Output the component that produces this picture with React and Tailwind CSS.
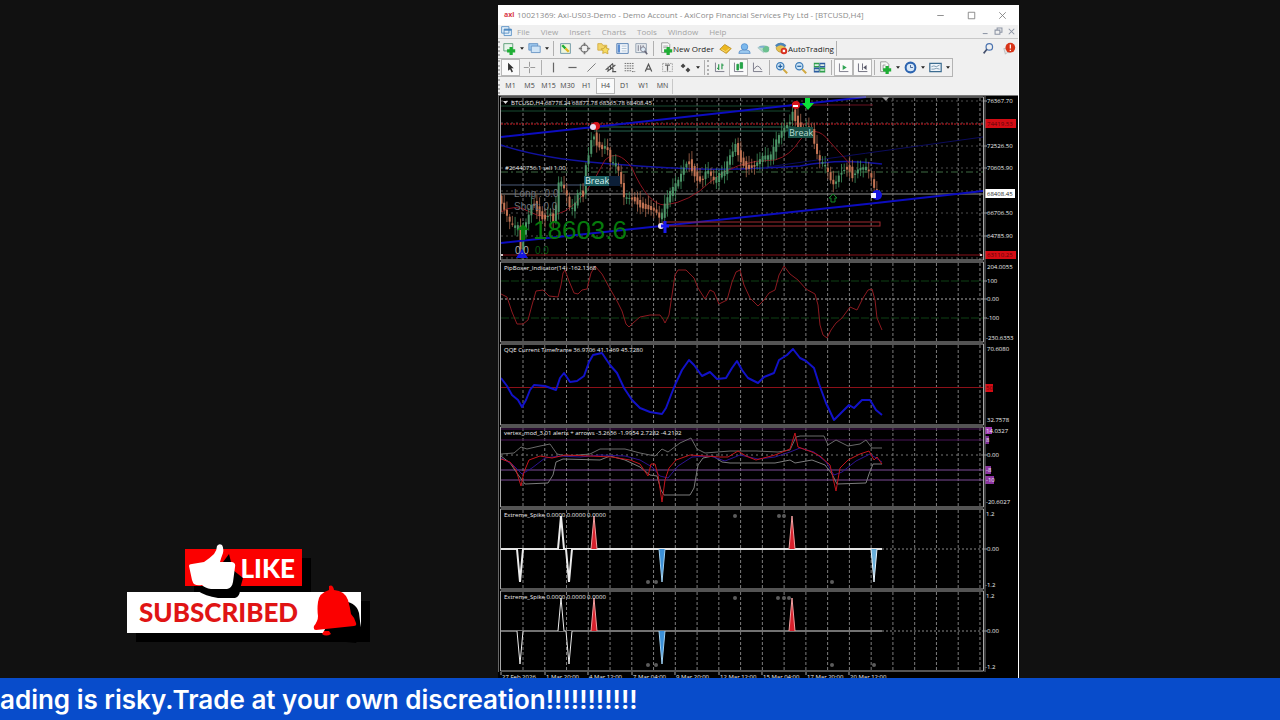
import React from 'react';

const GRID_X = Array.from({ length: 22 }, (_, i) => 523 + i * 21.76);
const GRID_Y = [101, 123, 146, 168, 191, 213, 236, 258];

const PRICE =
  '501,198 506,210 511,222 516,228 519,224 522,250 525,230 530,215 534,200 540,212 545,218 552,213 556,225 559,184 563,183 568,195 572,212 576,205 580,190 585,195 587,165 591,150 594,130 598,143 604,148 608,145 612,163 618,165 622,178 624,197 628,198 635,198 642,205 650,207 657,210 662,220 665,208 672,192 680,180 686,165 690,160 694,170 700,180 705,178 708,168 712,175 716,182 720,175 726,172 730,158 735,150 737,143 741,158 748,167 756,165 764,157 772,157 778,140 784,130 792,120 794,110 798,122 803,130 806,126 813,128 816,145 820,160 828,168 832,180 836,185 840,175 846,168 850,166 854,176 860,168 868,168 872,175 876,190 882,194';

const PIP =
  '501,294 507,297 512,312 517,324 523,324 528,320 532,305 536,291 543,290 549,296 558,297 561,285 563,273 565,270 569,281 574,293 578,294 582,290 587,289 591,273 595,266 602,274 609,287 617,301 622,311 626,324 629,327 633,323 640,317 650,315 660,315 663,319 665,323 669,315 672,295 675,275 678,270 686,270 694,278 698,288 705,299 710,290 714,292 719,304 727,300 732,282 736,272 740,270 744,285 750,298 758,306 764,300 769,293 775,290 779,275 784,266 790,274 798,280 806,289 815,294 818,305 820,325 823,335 827,338 831,330 836,323 842,318 850,307 857,310 863,298 868,290 872,289 875,300 877,318 882,330';

const QQE =
  '501,378 507,386 512,395 518,400 522,407 526,400 530,390 534,385 545,386 556,390 560,378 564,373 570,382 577,381 584,376 589,362 593,355 602,353 610,365 617,373 624,388 632,400 640,408 650,412 662,414 666,408 671,395 675,385 682,370 689,360 694,365 702,376 710,372 717,379 726,378 732,368 737,361 742,370 748,378 758,383 764,377 774,373 779,360 787,355 793,349 800,358 806,361 814,368 819,384 826,403 834,420 842,412 849,405 854,408 862,400 870,400 876,410 882,415';

const BAND_TOP =
  '501,454 514,453 521,447 527,449 540,446 550,444 557,454 566,456 590,454 600,449 625,449 640,453 655,456 662,449 668,452 680,443 691,438 697,449 705,453 730,451 756,451 778,452 790,450 796,437 800,436 824,436 828,445 836,440 848,446 860,444 866,440 872,448 882,448';
const BAND_LOW =
  '501,456 510,463 519,476 525,484 548,483 553,475 556,462 563,459 600,460 610,456 625,460 640,467 650,475 657,476 661,490 664,495 690,495 694,488 698,465 703,458 713,456 722,462 730,463 756,463 775,463 790,460 795,463 812,460 825,465 832,474 837,484 866,483 869,474 873,464 882,464';
const VERTEX =
  '501,459 510,462 516,470 521,486 524,472 529,460 540,456 552,458 565,455 590,456 612,457 630,460 640,464 648,476 651,464 655,464 658,475 662,502 665,480 669,468 676,460 690,455 705,456 720,457 728,457 738,451 746,456 756,460 775,455 790,449 795,433 798,447 812,452 820,456 830,465 836,491 840,468 848,460 860,454 869,451 874,460 877,457 882,464';
const VERTEX_SLOW =
  '501,458 512,464 522,474 532,468 545,458 560,456 580,457 600,455 625,456 640,460 652,467 660,476 668,478 678,466 692,457 710,456 725,461 740,455 758,459 775,457 790,452 800,448 814,452 826,462 834,475 842,472 856,461 870,454 882,462';

function toPoints(str) {
  return str.split(' ').map((p) => p.split(',').map(Number));
}

function priceAt(points, x) {
  for (let i = 1; i < points.length; i++) {
    const [x0, y0] = points[i - 1];
    const [x1, y1] = points[i];
    if (x <= x1) return y0 + ((y1 - y0) * (x - x0)) / (x1 - x0);
  }
  return points[points.length - 1][1];
}

function buildCandles() {
  const points = toPoints(PRICE);
  const list = [];
  for (let i = 0; i < 140; i++) {
    const x = 501.5 + i * 2.72;
    const noise = Math.sin(i * 12.9) * 3;
    const open = priceAt(points, x - 1.5) + noise * 0.6;
    const close = priceAt(points, x + 1.5) - noise * 0.6;
    const top = Math.min(open, close);
    const bottom = Math.max(open, close) + 1;
    list.push({
      x,
      top,
      bottom,
      high: top - 2 - Math.abs(Math.sin(i * 7.3)) * 7,
      low: bottom + 2 + Math.abs(Math.cos(i * 5.1)) * 6,
      up: close < open,
    });
  }
  return list;
}

const CANDLES = buildCandles();

function Label({ x, y, children, fill = '#f0f0f0', size = 6 }) {
  return (
    <text x={x} y={y} fill={fill} fontSize={size}>
      {children}
    </text>
  );
}

function Panel({ top, height, title, titleY, children, label }) {
  const bottom = top + height;
  return (
    <svg
      viewBox={`498 ${top} 520 ${height}`}
      className="block w-full"
      role="img"
      aria-label={label}
      fontFamily='"Open Sans", "Noto Sans", sans-serif'
    >
      <rect x="498" y={top} width="520" height={height} fill="#000" />
      {GRID_X.map((x) => (
        <line
          key={x}
          x1={x}
          x2={x}
          y1={top + 2}
          y2={bottom - 1}
          stroke="#7c7c7c"
          strokeWidth="1"
          strokeDasharray="3 2"
        />
      ))}
      {children}
      <Label x={504} y={titleY}>
        {title}
      </Label>
      <path
        d={`M500.5 ${bottom - 1}V${top + 1}H983.5V${bottom - 1}Z`}
        fill="none"
        stroke="#a8a8a8"
      />
      <path d={`M985 ${top}V${bottom}`} stroke="#777" />
      <path d={`M498.5 ${top}V${bottom}`} stroke="#666" />
    </svg>
  );
}

function AxisTick({ y, children }) {
  return (
    <>
      <path d={`M984 ${y}h3`} stroke="#aaa" />
      <Label x={987} y={y + 2}>
        {children}
      </Label>
    </>
  );
}

function PricePanel() {
  return (
    <Panel top={96} height={165} label="BTCUSD H4 price">
      {GRID_Y.map((y) => (
        <path key={y} d={`M501 ${y}H983`} stroke="#4d4d4d" strokeDasharray="2 3" />
      ))}
      <g fill="none">
        <path d="M501 106H790M501 111H790" stroke="#164a30" />
        <path d="M594 127H796M594 131H796" stroke="#25634f" />
        <path d="M790 105H873" stroke="#6b1020" />
        <path d="M501 124H983" stroke="#d01822" strokeDasharray="2 1" />
        <path d="M501 255H983" stroke="#8a1018" />
        <path d="M501 172H983" stroke="#3f6b42" strokeDasharray="7 3 2 3" />
        <path d="M501 185H620" stroke="#4a5a78" />
        <path d="M501 194H983" stroke="#8e8e8e" />
        <path d="M501 145Q540 158 600 163T700 169T800 166Q840 158 882 164" stroke="#1212a0" strokeWidth="1.5" />
        <path d="M760 168Q860 154 983 137" stroke="#0b0b5c" />
        <path
          d="M501 212Q515 203 530 212T565 211Q585 200 605 160Q618 148 632 168Q648 205 665 205Q690 202 710 182Q735 160 775 160Q790 156 800 140Q815 122 830 142L850 164"
          stroke="#8c1420"
        />
      </g>
      {CANDLES.map((c) => (
        <g key={c.x}>
          <path
            d={`M${c.x} ${c.high}V${c.low}`}
            stroke={c.up ? '#3f8f5c' : '#a8674e'}
            strokeWidth="0.8"
          />
          <rect
            x={c.x - 1}
            y={c.top}
            width="2"
            height={c.bottom - c.top}
            fill={c.up ? '#4c9468' : '#c47454'}
          />
        </g>
      ))}
      <path d="M501 137L594 127L794 105L866 97" stroke="#0c0cc0" strokeWidth="2" fill="none" />
      <path d="M501 243L661 226L876 203L983 191" stroke="#0c0cc0" strokeWidth="2" fill="none" />
      <rect x="663" y="222" width="217" height="4" fill="none" stroke="#a02a30" />
      {/* swing markers */}
      <circle cx="596" cy="126" r="4" fill="#d8141c" />
      <circle cx="593" cy="127" r="3" fill="#e8dcf0" />
      <circle cx="796" cy="105" r="4" fill="#d8141c" />
      <path d="M793 106h5" stroke="#fff" strokeWidth="2" />
      <path d="M805 98h5v5h4l-6 7-6-7h3z" fill="#0be03a" />
      <circle cx="661" cy="226" r="3" fill="#e8dcf0" />
      <path d="M661 226h8M665 221v12" stroke="#1a1af0" strokeWidth="3" />
      <circle cx="877" cy="195" r="5" fill="#1616e0" />
      <rect x="871" y="193" width="5" height="5" fill="#f4f4ff" />
      <path d="M516 258l6-9 6 9z" fill="#1616e0" />
      <path d="M833 194l4 4h-2v4h-4v-4h-2z" fill="none" stroke="#138a28" />
      <path d="M882 97h7l-3 4z" fill="#999" />
      <circle cx="502" cy="255" r="1" fill="#fff" />
      <circle cx="981" cy="255" r="1" fill="#fff" />
      {/* chart texts */}
      <rect x="597" y="176" width="23" height="10" fill="#0c1f38" />
      <rect x="584" y="176" width="25" height="10" fill="#1c5f62" />
      <Label x={585} y={184} size={9} fill="#d5eeee">Break</Label>
      <rect x="788" y="127" width="25" height="11" fill="#175045" />
      <Label x={789} y={136} size={9} fill="#b8dcd4">Break</Label>
      <g fontFamily='"Liberation Sans", sans-serif'>
        <Label x={514} y={197} size={10} fill="#6c7078">Long : 0.0</Label>
        <Label x={514} y={210} size={10} fill="#6c7078">Short: 0.0</Label>
        <Label x={533} y={239} size={26} fill="#067a0c">18603.6</Label>
        <path d="M523 224l6 6h-4v10h-4v-10h-4z" fill="#067a0c" />
        <Label x={515} y={254} size={10} fill="#b0b0b0">0.0</Label>
        <Label x={535} y={254} size={10} fill="#0b5a10">0.0</Label>
      </g>
      <Label x={505} y={170}>#26440756.1 sell 1.00</Label>
      <path d="M503 101h5l-2.500 3z" fill="#ddd" />
      <Label x={511} y={105}>BTCUSD,H4 68778.24 68877.78 68365.78 68408.45</Label>
      <AxisTick y={101}>76367.70</AxisTick>
      <rect x="985" y="119" width="31" height="9" fill="#d40c14" />
      <Label x={987} y={126} fill="#5c0408">74419.53</Label>
      <AxisTick y={146}>72526.50</AxisTick>
      <AxisTick y={168}>70605.90</AxisTick>
      <rect x="985" y="189" width="30" height="9" fill="#fff" />
      <Label x={987} y={196} fill="#222">68408.45</Label>
      <AxisTick y={213}>66706.50</AxisTick>
      <AxisTick y={236}>64785.90</AxisTick>
      <rect x="985" y="251" width="31" height="8" fill="#d40c14" />
      <Label x={987} y={257} fill="#5c0408">63110.25</Label>
    </Panel>
  );
}

function PipPanel() {
  return (
    <Panel top={261} height={82} title="PipBoxer_Indicator(14) -162.1368" titleY={270} label="PipBoxer">
      <path d="M501 281H983M501 318H983" stroke="#0e4014" strokeDasharray="8 2" />
      <path d="M501 299H983" stroke="#aaa" strokeDasharray="2 2" />
      <polyline points={PIP} fill="none" stroke="#8c1a20" />
      <Label x={987} y={269}>204.0055</Label>
      <AxisTick y={281}>100</AxisTick>
      <AxisTick y={299}>0.00</AxisTick>
      <AxisTick y={318}>-100</AxisTick>
      <Label x={986} y={340}>-230.6353</Label>
    </Panel>
  );
}

function QqePanel() {
  return (
    <Panel top={343} height={83} title="QQE Current Timeframe 36.9706 41.1469 45.7280" titleY={352} label="QQE">
      <path d="M501 387.500H983" stroke="#8c1018" />
      <polyline points={QQE} fill="none" stroke="#1212c8" strokeWidth="2" strokeLinejoin="round" />
      <Label x={987} y={351}>70.6080</Label>
      <rect x="985" y="384" width="8" height="8" fill="#d40c14" />
      <Label x={986} y={390} fill="#5c0408">50</Label>
      <Label x={987} y={422}>32.7578</Label>
    </Panel>
  );
}

function VertexPanel() {
  return (
    <Panel
      top={426}
      height={82}
      title="vertex_mod_3.01 alerts + arrows -3.2656 -1.9954 2.7282 -4.2192"
      titleY={435}
      label="Vertex"
    >
      <path d="M501 429H983M501 440H983" stroke="#4a1458" />
      <path d="M501 470H983M501 480H983" stroke="#7c4a96" />
      <path d="M501 455H983" stroke="#777" strokeDasharray="2 3" />
      <polyline points={BAND_TOP} fill="none" stroke="#6a6a6a" />
      <polyline points={BAND_LOW} fill="none" stroke="#7c7c7c" />
      <polyline points={VERTEX_SLOW} fill="none" stroke="#2c1290" />
      <polyline points={VERTEX} fill="none" stroke="#c4141c" />
      <rect x="985" y="427" width="7" height="7" fill="#a33cb4" />
      <Label x={986} y={433}>14.0327</Label>
      <rect x="985" y="436" width="4" height="8" fill="#7a2890" />
      <Label x={986} y={442}>8</Label>
      <AxisTick y={455}>0.00</AxisTick>
      <rect x="985" y="466" width="6" height="8" fill="#8c34a0" />
      <Label x={986} y={472}>-8</Label>
      <rect x="985" y="476" width="9" height="8" fill="#8c34a0" />
      <Label x={986} y={482}>-10</Label>
      <Label x={986} y={504}>-20.6027</Label>
    </Panel>
  );
}

function Spike({ x, base, tip, fill = 'none', stroke = '#ececec', width = 1 }) {
  return (
    <path
      d={`M${x - 3} ${base}L${x} ${tip}L${x + 3} ${base}`}
      fill={fill}
      stroke={stroke}
      strokeWidth={width}
    />
  );
}

function SpikePanel({ top, base, weight, dots, last, label }) {
  const up = base - 33;
  const down = base + 33;
  return (
    <Panel top={top} height={82} title="Extreme_Spike 0.0000 0.0000 0.0000" titleY={top + 9} label={label}>
      <path d={`M882 ${base}H983`} stroke="#888" strokeDasharray="2 2" />
      <path d={`M501 ${base}H882`} stroke="#e4e4e4" strokeWidth={weight} />
      <Spike x={520} base={base} tip={down} width={weight} fill="#000" />
      <Spike x={561} base={base} tip={up} width={weight} fill="#000" />
      <Spike x={569} base={base} tip={down} width={weight} fill="#000" />
      <Spike x={594} base={base} tip={up} fill="#d8202c" stroke="#f0a0a0" />
      <Spike x={662} base={base} tip={down} fill="#3c90d8" stroke="#a0d0f0" />
      <Spike x={792} base={base} tip={up} fill="#d8202c" stroke="#f0a0a0" />
      {last && <Spike x={874} base={base} tip={down} fill="#6ab0dc" stroke="#e8f4fc" />}
      {dots.map(([x, y]) => (
        <circle key={`${x}-${y}`} cx={x} cy={y} r="2" fill="#5c5c5c" />
      ))}
      <Label x={986} y={top + 8}>1.2</Label>
      <AxisTick y={base}>0.00</AxisTick>
      <Label x={985} y={top + 79}>-1.2</Label>
    </Panel>
  );
}

const DATES = [
  [501, '27 Feb 2026'],
  [545, '1 Mar 20:00'],
  [588, '4 Mar 12:00'],
  [632, '7 Mar 04:00'],
  [675, '9 Mar 20:00'],
  [719, '12 Mar 12:00'],
  [762, '15 Mar 04:00'],
  [806, '17 Mar 20:00'],
  [849, '20 Mar 12:00'],
];

function TimeAxis() {
  return (
    <svg viewBox="498 672 520 14" className="block w-full" fontFamily='"Open Sans", sans-serif'>
      <rect x="498" y="672" width="520" height="14" fill="#000" />
      {DATES.map(([x, text]) => (
        <g key={text}>
          <path d={`M${x} 672v3`} stroke="#aaa" />
          <Label x={x + 1} y={679}>{text}</Label>
        </g>
      ))}
    </svg>
  );
}

/* toolbar */

function Icon({ children }) {
  return (
    <svg viewBox="0 0 16 16" className="size-[13px] shrink-0" fill="none" aria-hidden="true">
      {children}
    </svg>
  );
}

const plus = <path d="M8 7h3V4h4v3h3v4h-3v3h-4v-3H8z" transform="translate(-3 2)" fill="#1fae35" />;

const ICONS = {
  newChart: (
    <>
      <path d="M1 2h11v9H1z" fill="#e8f4ec" stroke="#4a9468" />
      {plus}
    </>
  ),
  profiles: (
    <>
      <path d="M1 2h11v8H1z" fill="#9cc8ee" stroke="#5c8cc0" />
      <path d="M4 5h11v8H4z" fill="#cfe4f6" stroke="#5c8cc0" />
    </>
  ),
  market: (
    <>
      <path d="M2 2h12v12H2z" fill="#eef6dc" stroke="#5a8a9c" />
      <path d="M4 4l4 4" stroke="#1fae35" strokeWidth="3" />
      <path d="M8 8l4 4" stroke="#e2b420" strokeWidth="3" />
    </>
  ),
  data: (
    <>
      <circle cx="8" cy="8" r="4.500" stroke="#777" strokeWidth="1.500" />
      <path d="M8 1v4M8 11v4M1 8h4M11 8h4" stroke="#777" strokeWidth="2" />
    </>
  ),
  navigator: (
    <>
      <path d="M1 2h5l1 2h5v6H1z" fill="#f2d468" stroke="#d0a83c" />
      <path d="M10 5l2 3 3 .5-2 2.500.5 3.500-3.500-1.500L7 14l.5-3.500L5 8.500 8.500 8z" fill="#f6dc60" stroke="#c8a032" />
    </>
  ),
  terminal: (
    <>
      <path d="M1 2h14v12H1z" fill="#f4f8fc" stroke="#3c6ca8" />
      <path d="M2 3h3v10H2z" fill="#5a8cd0" />
      <path d="M7 5h6M7 8h6M7 11h6" stroke="#a8bcd0" />
    </>
  ),
  tester: (
    <>
      <path d="M1 2h13v11H1z" fill="#e8ecf0" stroke="#8898a8" />
      <path d="M4 4v7M7 4v6M10 4v3" stroke="#667" />
      <circle cx="10" cy="9" r="3" fill="#dceaf6" stroke="#778" />
      <path d="M12 11l3 4" stroke="#667" strokeWidth="2" />
    </>
  ),
  order: (
    <>
      <path d="M2 1h8l2 2v10H2z" fill="#f8f8f8" stroke="#8c8c8c" />
      <path d="M4 5h6M4 7h4" stroke="#999" />
      {plus}
    </>
  ),
  editor: (
    <>
      <path d="M1 9l6-6 8 5-6 6z" fill="#ecb820" stroke="#b8881c" />
      <path d="M3 9l5 3 5-4" stroke="#fae490" />
    </>
  ),
  community: (
    <>
      <circle cx="8" cy="6" r="4" fill="#7cb8ec" stroke="#4c8cd0" />
      <path d="M1 14q0-4 4-4h6q4 0 4 4z" fill="#9ccaf0" stroke="#5c90c8" />
    </>
  ),
  signals: (
    <>
      <path d="M1 7q7-5 14 0l-7 6z" fill="#b8dccc" stroke="#9cc0c4" />
      <circle cx="11" cy="9" r="4" fill="#6cc090" />
      <path d="M3 6h6" stroke="#7cacd0" strokeWidth="2" />
    </>
  ),
  auto: (
    <>
      <circle cx="7" cy="7" r="5.500" fill="#e4c050" stroke="#b89838" />
      <path d="M1 5q6-5 12 0" stroke="#4c84b8" strokeWidth="3" />
      <circle cx="11" cy="11" r="4" fill="#d83020" />
      <path d="M9.500 9.500h3v3h-3z" fill="#fff" />
    </>
  ),
  cursor: <path d="M5 2v10l2.500-2 2 4 1.500-1-2-4h3z" fill="#333" />,
  cross: <path d="M8 1v6M8 9v6M1 8h6M9 8h6" stroke="#888" />,
  vline: <path d="M8 2v12" stroke="#666" strokeWidth="1.500" />,
  hline: <path d="M3 8h10" stroke="#666" strokeWidth="1.500" />,
  tline: <path d="M3 13L13 3" stroke="#666" />,
  channel: <path d="M2 11l9-8M4 13l10-8M5 7v6M8 5v6M11 4v9M10 13h5" stroke="#555" strokeWidth="1.400" />,
  fibo: <path d="M2 3h12M2 6h12M2 9h12M2 12h8M11 13h4" stroke="#555" strokeDasharray="2 1" />,
  letter: <path d="M4 13L8 4l4 9M6 10h4" stroke="#555" strokeWidth="1.500" />,
  textLabel: (
    <>
      <path d="M2 3h12v10H2z" stroke="#999" strokeDasharray="2 1" />
      <path d="M5 5h6M8 5v7" stroke="#666" strokeWidth="1.500" />
    </>
  ),
  arrows: <path d="M2 6l3-3 3 3-3 3zM8 11l3-3 3 3-3 3z" fill="#444" />,
  bars: (
    <>
      <path d="M3 2v11h11" stroke="#667" />
      <path d="M7 4v7M5 9h2M11 3v7M11 5h2" stroke="#2f9c50" strokeWidth="1.500" />
    </>
  ),
  candles: (
    <>
      <path d="M3 2v11h11" stroke="#667" />
      <path d="M6 4h2v7H6zM10 2h3v7h-3z" fill="#26a848" stroke="#1c9c40" />
    </>
  ),
  line: (
    <>
      <path d="M3 2v11h11" stroke="#667" />
      <path d="M4 10q4-8 9 1" stroke="#667" />
    </>
  ),
  zoomIn: (
    <>
      <path d="M10 10l5 5" stroke="#d0a840" strokeWidth="2.500" />
      <circle cx="6.500" cy="6.500" r="4.500" fill="#cfe6f8" stroke="#3c7cb8" strokeWidth="1.500" />
      <path d="M4 6.500h5M6.500 4v5" stroke="#24609c" strokeWidth="1.500" />
    </>
  ),
  zoomOut: (
    <>
      <path d="M10 10l5 5" stroke="#d0a840" strokeWidth="2.500" />
      <circle cx="6.500" cy="6.500" r="4.500" fill="#cfe6f8" stroke="#3c7cb8" strokeWidth="1.500" />
      <path d="M4 6.500h5" stroke="#24609c" strokeWidth="1.500" />
    </>
  ),
  tile: (
    <>
      <path d="M1 2h7v6H1zM8 8h7v6H8z" fill="#2fa04c" />
      <path d="M8 2h7v6H8zM1 8h7v6H1z" fill="#2c5ca0" />
      <path d="M2 5h5M9 5h5M2 11h5M9 11h5" stroke="#dff0e4" strokeWidth="2" />
    </>
  ),
  scroll: (
    <>
      <path d="M3 3v10h11" stroke="#667" />
      <path d="M7 5l5 3-5 3z" fill="#30a454" />
    </>
  ),
  shift: (
    <>
      <path d="M3 3v10h11M8 3v8" stroke="#556" />
      <path d="M13 5v6L9 8z" fill="#556" />
    </>
  ),
  indicators: (
    <>
      <path d="M2 1h7l3 3v9H2z" fill="#f6f6f6" stroke="#8c8c8c" />
      <path d="M5 11V5h3" stroke="#888" />
      {plus}
    </>
  ),
  periods: (
    <>
      <circle cx="8" cy="8" r="6" fill="#d8e8f8" stroke="#2c64b0" strokeWidth="2.500" />
      <path d="M8 5v3h3" stroke="#2c4c80" />
    </>
  ),
  templates: (
    <>
      <path d="M1 3h14v10H1z" fill="#eef4fa" stroke="#3c6c90" strokeWidth="1.500" />
      <path d="M3 7l3-1 3 1 4-2M3 10h3l3-1 4 1" stroke="#6c8ca4" />
    </>
  ),
};

function Tool({ name, label, active, menu }) {
  return (
    <button
      type="button"
      aria-label={label || name}
      className={
        'flex h-[17px] shrink-0 items-center justify-center ' +
        (menu ? 'w-[25px] ' : 'w-[19px] ') +
        (active ? 'border border-[#b8b8b8] bg-[#fafafa]' : '')
      }
    >
      <Icon>{ICONS[name]}</Icon>
      {menu && (
        <svg viewBox="0 0 6 4" className="ml-1 h-[3px] w-[4px]" aria-hidden="true">
          <path d="M0 0h6L3 4z" fill="#222" />
        </svg>
      )}
    </button>
  );
}

function Divider() {
  return <span className="mx-[2px] h-[15px] w-px shrink-0 bg-[#b0b0b0]" />;
}

function Grip() {
  return <span className="h-[15px] w-[3px] shrink-0 border-l-2 border-dotted border-[#b0b0b0]" />;
}

function TitleBar() {
  return (
    <header className="flex h-[20px] items-center bg-white pl-[6px] text-[8px] text-[#8c8c8c]">
      <span className="w-[13px] text-[7px] font-bold text-[#d83848]">axi</span>
      <h1 className="flex-1 whitespace-nowrap">
        10021369: Axi-US03-Demo - Demo Account - AxiCorp Financial Services Pty Ltd - [BTCUSD,H4]
      </h1>
      {['M4 8h8', 'M4 4h8v8H4z', 'M4 4l8 8M12 4l-8 8'].map((d, i) => (
        <button
          key={d}
          type="button"
          aria-label={['Minimize', 'Maximize', 'Close'][i]}
          className="flex w-[31px] justify-center"
        >
          <Icon>
            <path d={d} stroke="#777" />
          </Icon>
        </button>
      ))}
    </header>
  );
}

function MenuBar() {
  return (
    <nav className="flex h-[14px] items-center border-b border-[#c8c8c8] pl-[2px] text-[8px] text-[#a4a4a4]">
      <Icon>
        <path d="M2 2h9v8H2zM5 5h9v8H5z" fill="#e4f0fa" stroke="#4c88c0" />
        <path d="M5 6h9" stroke="#4c88c0" strokeWidth="2" />
      </Icon>
      <ul className="ml-1 flex flex-1 gap-[11px]">
        {['File', 'View', 'Insert', 'Charts', 'Tools', 'Window', 'Help'].map((item) => (
          <li key={item}>
            <button type="button">{item}</button>
          </li>
        ))}
      </ul>
      {['M4 11h7', 'M3 6h7v6H3zM6 6V3h7v6h-3', 'M4 4l8 8M12 4l-8 8'].map((d, i) => (
        <button key={d} type="button" aria-label={['Minimize chart', 'Restore chart', 'Close chart'][i]} className="px-px">
          <svg viewBox="0 0 16 16" className="size-[11px]" fill="none">
            <path d={d} stroke="#8c94a4" strokeWidth="1.500" />
          </svg>
        </button>
      ))}
    </nav>
  );
}

function MainToolbar() {
  return (
    <div className="flex h-[19px] items-center text-[8px] text-[#222]">
      <Grip />
      <Tool name="newChart" label="New chart" menu />
      <Tool name="profiles" label="Profiles" menu />
      <Divider />
      <Tool name="market" label="Market Watch" />
      <Tool name="data" label="Data Window" />
      <Tool name="navigator" label="Navigator" />
      <Tool name="terminal" label="Terminal" />
      <Tool name="tester" label="Strategy Tester" />
      <Divider />
      <button type="button" className="ml-1 flex w-[56px] items-center whitespace-nowrap">
        <Icon>{ICONS.order}</Icon>
        New Order
      </button>
      <Tool name="editor" label="MetaEditor" />
      <Tool name="community" label="Community" />
      <Tool name="signals" label="Signals" />
      <button type="button" className="ml-[2px] flex items-center whitespace-nowrap">
        <Icon>{ICONS.auto}</Icon>
        AutoTrading
      </button>
      <Divider />
      <span className="flex-1" />
      <button type="button" aria-label="Search" className="mr-2">
        <Icon>
          <circle cx="9" cy="6" r="4" stroke="#4c74b0" strokeWidth="1.500" />
          <path d="M6 9l-4 5" stroke="#44506c" strokeWidth="2" />
        </Icon>
      </button>
      <button type="button" aria-label="Notifications" className="mr-[2px]">
        <Icon>
          <path d="M1 8h8v5H5l-2 2z" fill="#e4e4e4" stroke="#b8b8b8" />
          <circle cx="9" cy="7" r="6" fill="#d83418" />
          <path d="M9 3v5M9 9.500v1.500" stroke="#fff" strokeWidth="1.500" />
        </Icon>
      </button>
    </div>
  );
}

function DrawToolbar() {
  return (
    <div className="flex h-[19px] items-center">
      <div className="flex h-full items-center border-y border-r border-[#b4b4b4]">
        <Grip />
        <Tool name="cursor" active />
        <Tool name="cross" label="Crosshair" />
        <Divider />
        <Tool name="vline" label="Vertical line" />
        <Tool name="hline" label="Horizontal line" />
        <Tool name="tline" label="Trendline" />
        <Tool name="channel" />
        <Tool name="fibo" />
        <Tool name="letter" label="Text" />
        <Tool name="textLabel" label="Text label" />
        <Tool name="arrows" menu />
        <Divider />
        <Grip />
        <Tool name="bars" />
        <Tool name="candles" active />
        <Tool name="line" />
        <Divider />
        <Tool name="zoomIn" label="Zoom in" />
        <Tool name="zoomOut" label="Zoom out" />
        <Tool name="tile" />
        <Divider />
        <Tool name="scroll" active />
        <Tool name="shift" active />
        <Divider />
        <Tool name="indicators" menu />
        <Tool name="periods" menu />
        <Tool name="templates" menu />
      </div>
    </div>
  );
}

function Timeframes() {
  return (
    <div className="flex h-[18px] items-center text-[7px] text-[#444]">
      <Grip />
      {['M1', 'M5', 'M15', 'M30', 'H1', 'H4', 'D1', 'W1', 'MN'].map((tf) => (
        <button
          key={tf}
          type="button"
          className={
            'h-[16px] w-[19px] text-center ' +
            (tf === 'H4' ? 'border border-[#b8b8b8] bg-[#fafafa]' : '')
          }
        >
          {tf}
        </button>
      ))}
      <span className="h-[15px] w-px bg-[#c8c8c8]" />
    </div>
  );
}

function Terminal() {
  return (
    <section className='mt-[5px] border-r border-white bg-[#f0f0f0] font-["Open_Sans",sans-serif]'>
      <TitleBar />
      <MenuBar />
      <MainToolbar />
      <DrawToolbar />
      <Timeframes />
      <div className="h-px bg-[#777]" />
      <PricePanel />
      <PipPanel />
      <QqePanel />
      <VertexPanel />
      <SpikePanel
        top={508}
        base={549}
        weight={2}
        last
        label="Extreme Spike 1"
        dots={[[735, 516], [779, 516], [784, 516], [648, 582], [656, 582], [832, 582]]}
      />
      <SpikePanel
        top={590}
        base={631}
        weight={1}
        label="Extreme Spike 2"
        dots={[[735, 598], [778, 598], [784, 598], [789, 598], [648, 665], [656, 665], [832, 665], [874, 665]]}
      />
      <TimeAxis />
    </section>
  );
}

function Subscribe() {
  return (
    <div className='flex flex-col items-start pb-[45px] pl-[127px] font-["Lato",sans-serif] font-black'>
      <button
        type="button"
        className="relative ml-[58px] flex h-[37px] w-[117px] items-center justify-end bg-[#fb0000] pr-[7px] text-[26px] leading-none text-white shadow-[9px_9px_0_#000]"
      >
        <svg viewBox="0 0 56 56" className="absolute -top-[5px] left-[4px] z-10 size-[56px]" aria-hidden="true">
          <path
            d="M9 47Q16 52 29 54H46Q51 53 51 45L54 34L44 26L40 10L34 18L14 44Z"
            fill="#000"
          />
          <path
            d="M0 22Q0 20 3 20L15 18Q21 14 25 10Q28 6 28 2Q30-1 33 1Q35 4 34 9Q32 14 31 18H43Q47 19 46 23L44 38Q43 44 38 45H22Q16 44 13 41Q8 42 5 40Q4 39 3 36Z"
            fill="#fff"
          />
        </svg>
        LIKE
      </button>
      <button
        type="button"
        className="relative mt-[6px] flex h-[41px] w-[234px] items-center bg-white pb-[2px] pl-[12px] text-[26px] leading-none text-[#e01414] shadow-[9px_9px_0_#000]"
      >
        SUBSCRIBED
        <svg viewBox="0 0 56 62" className="absolute -top-[7px] left-[185px] h-[62px] w-[56px]" aria-hidden="true">
          <path d="M28 16Q44 16 47 28Q48 38 50 48L44 58L14 55L12 46Z" fill="#000" />
          <path
            d="M17 1Q21-1 22 5Q33 6 36 15Q38 22 39 29Q43 33 44 38Q45 41 42 41L4 45Q1 45 2 41Q6 36 6 31Q5 24 6 17Q7 8 17 5Z"
            fill="#fb0000"
          />
          <path d="M10 49Q14 52 19 49L17 46H12Z" fill="#fb0000" />
        </svg>
      </button>
    </div>
  );
}

export default function App() {
  return (
    <div className="flex h-screen flex-col overflow-hidden bg-[#111]">
      <main className="grid min-h-0 flex-1 grid-cols-[498fr_521fr_261fr] grid-rows-1 overflow-hidden">
        <div className="flex flex-col justify-end">
          <Subscribe />
        </div>
        <Terminal />
      </main>
      <footer className='flex h-[42px] shrink-0 items-center overflow-hidden bg-[#084ccb] font-["Inter",sans-serif] text-[26px] font-semibold whitespace-nowrap text-white'>
        <p>ading is risky.Trade at your own discreation!!!!!!!!!!!</p>
      </footer>
    </div>
  );
}
